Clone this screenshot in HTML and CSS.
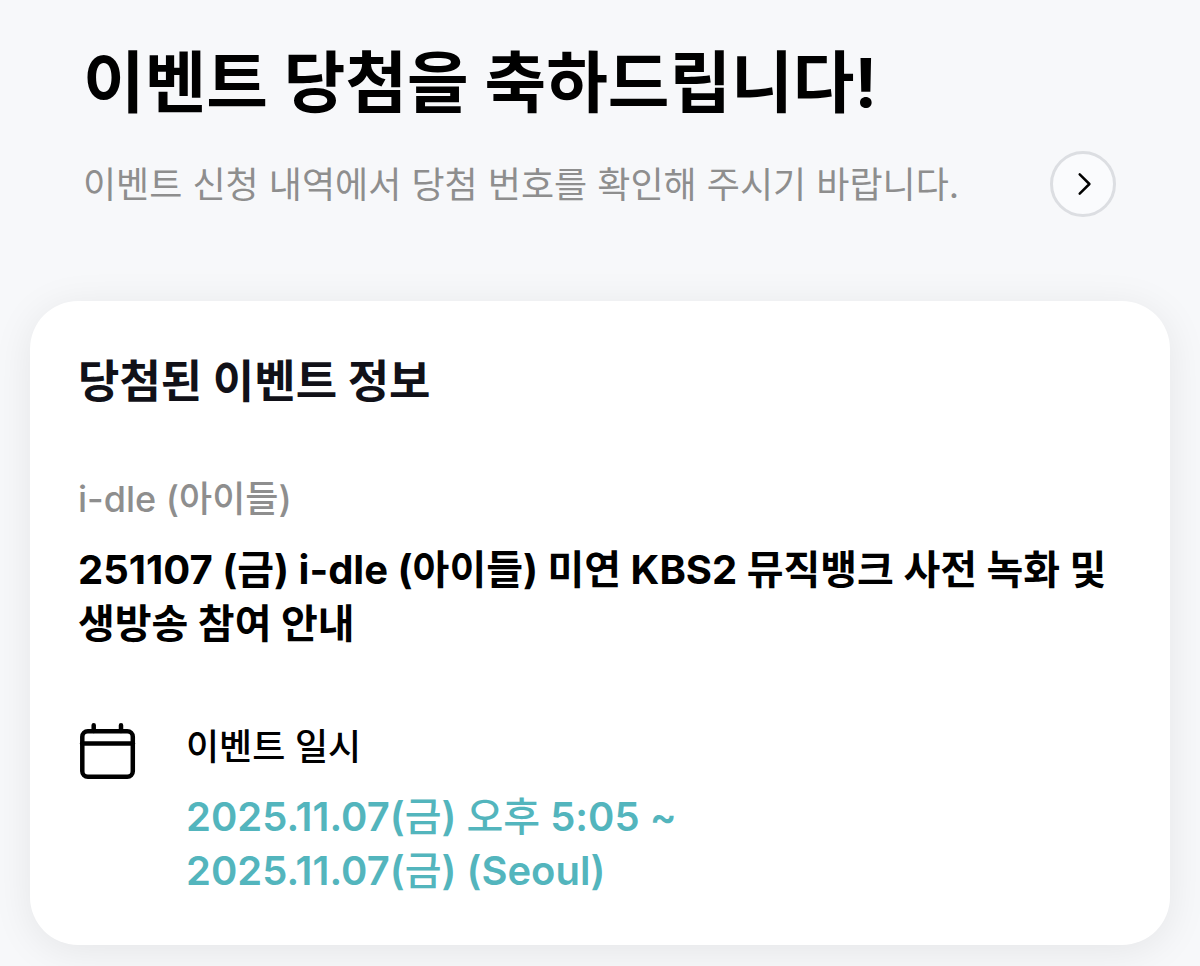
FILE: index.html
```html
<!DOCTYPE html>
<html lang="ko">
<head>
<meta charset="utf-8">
<meta name="viewport" content="width=device-width, initial-scale=1">
<title>이벤트 당첨</title>
<link rel="stylesheet" href="styles.css">
</head>
<body>
<main class="page">
  <header class="intro">
    <h1 class="intro-title">이벤트 당첨을 축하드립니다!</h1>
    <div class="intro-row">
      <p class="intro-text">이벤트 신청 내역에서 당첨 번호를 확인해 주시기 바랍니다.</p>
      <button class="more" type="button" aria-label="이벤트 신청 내역">
        <svg class="more-icon" viewBox="0 0 24 24" aria-hidden="true"><path d="M8.700 2.300 18.400 12 8.700 21.700"/></svg>
      </button>
    </div>
  </header>
  <section class="card">
    <h2 class="card-title">당첨된 이벤트 정보</h2>
    <p class="artist">i-dle (아이들)</p>
    <h3 class="event-name">251107 (금) i-dle (아이들) 미연 KBS2 뮤직뱅크 사전 녹화 및 생방송 참여 안내</h3>
    <div class="schedule">
      <svg class="calendar" viewBox="0 0 58 58" aria-hidden="true"><rect x="4.300" y="9.300" width="50.500" height="45.500" rx="5.500"/><path d="M4 21.500H55M15.700 3.300V9M43 3.300V9"/></svg>
      <dl class="schedule-info">
        <dt class="schedule-label">이벤트 일시</dt>
        <dd class="schedule-time">2025.11.07(<span class="hangul">금</span>) <span class="hangul">오후</span> 5:05 ~<br>2025.11.07(<span class="hangul">금</span>) (Seoul)</dd>
      </dl>
    </div>
  </section>
</main>
</body>
</html>
```

FILE: styles.css
```css
* { box-sizing: border-box; margin: 0; padding: 0; }
body {
  background: #f7f8fa;
  color: #000;
  font-family: Inter, "Noto Sans CJK KR", sans-serif;
  word-break: keep-all;
}
.page { padding: 35px 30px 21px; }
.intro { padding: 0 54px 0 53px; }
.intro-title { font-size: 67px; font-weight: 700; line-height: 96px; }
.intro-row {
  display: flex;
  align-items: center;
  justify-content: space-between;
  margin-top: 20px;
}
.intro-text { padding-top: 2px; color: #8e8e8e; font-size: 36px; line-height: 52px; }
.more {
  display: flex;
  flex: none;
  align-items: center;
  justify-content: center;
  width: 66px;
  height: 66px;
  background: #fafbfd;
  border: 3px solid #dcdee2;
  border-radius: 50%;
}
.more-icon { width: 24px; height: 24px; fill: none; stroke: #000; stroke-width: 2.5; stroke-linecap: round; stroke-linejoin: round; }
.card {
  margin-top: 84px;
  padding: 48px 48px 47px;
  background: #fff;
  border-radius: 48px;
  box-shadow: 0 6px 40px rgba(0, 0, 0, 0.08);
}
.card-title { color: #111118; font-size: 45px; font-weight: 700; line-height: 66px; }
.artist { margin-top: 60px; color: #8e8e8e; font-size: 36px; font-weight: 500; line-height: 48px; }
.event-name { margin-top: 20px; font-size: 40px; font-weight: 700; line-height: 54px; }
.schedule { display: flex; gap: 50px; margin-top: 71px; }
.calendar { flex: none; width: 58px; height: 58px; fill: none; stroke: #000; stroke-width: 4.5; stroke-linecap: round; }
.schedule-label { font-size: 36px; font-weight: 500; line-height: 50px; }
.schedule-time { margin-top: 18px; color: #53b5bd; font-size: 40px; font-weight: 600; line-height: 54px; }
.hangul { font-weight: 500; }
```
